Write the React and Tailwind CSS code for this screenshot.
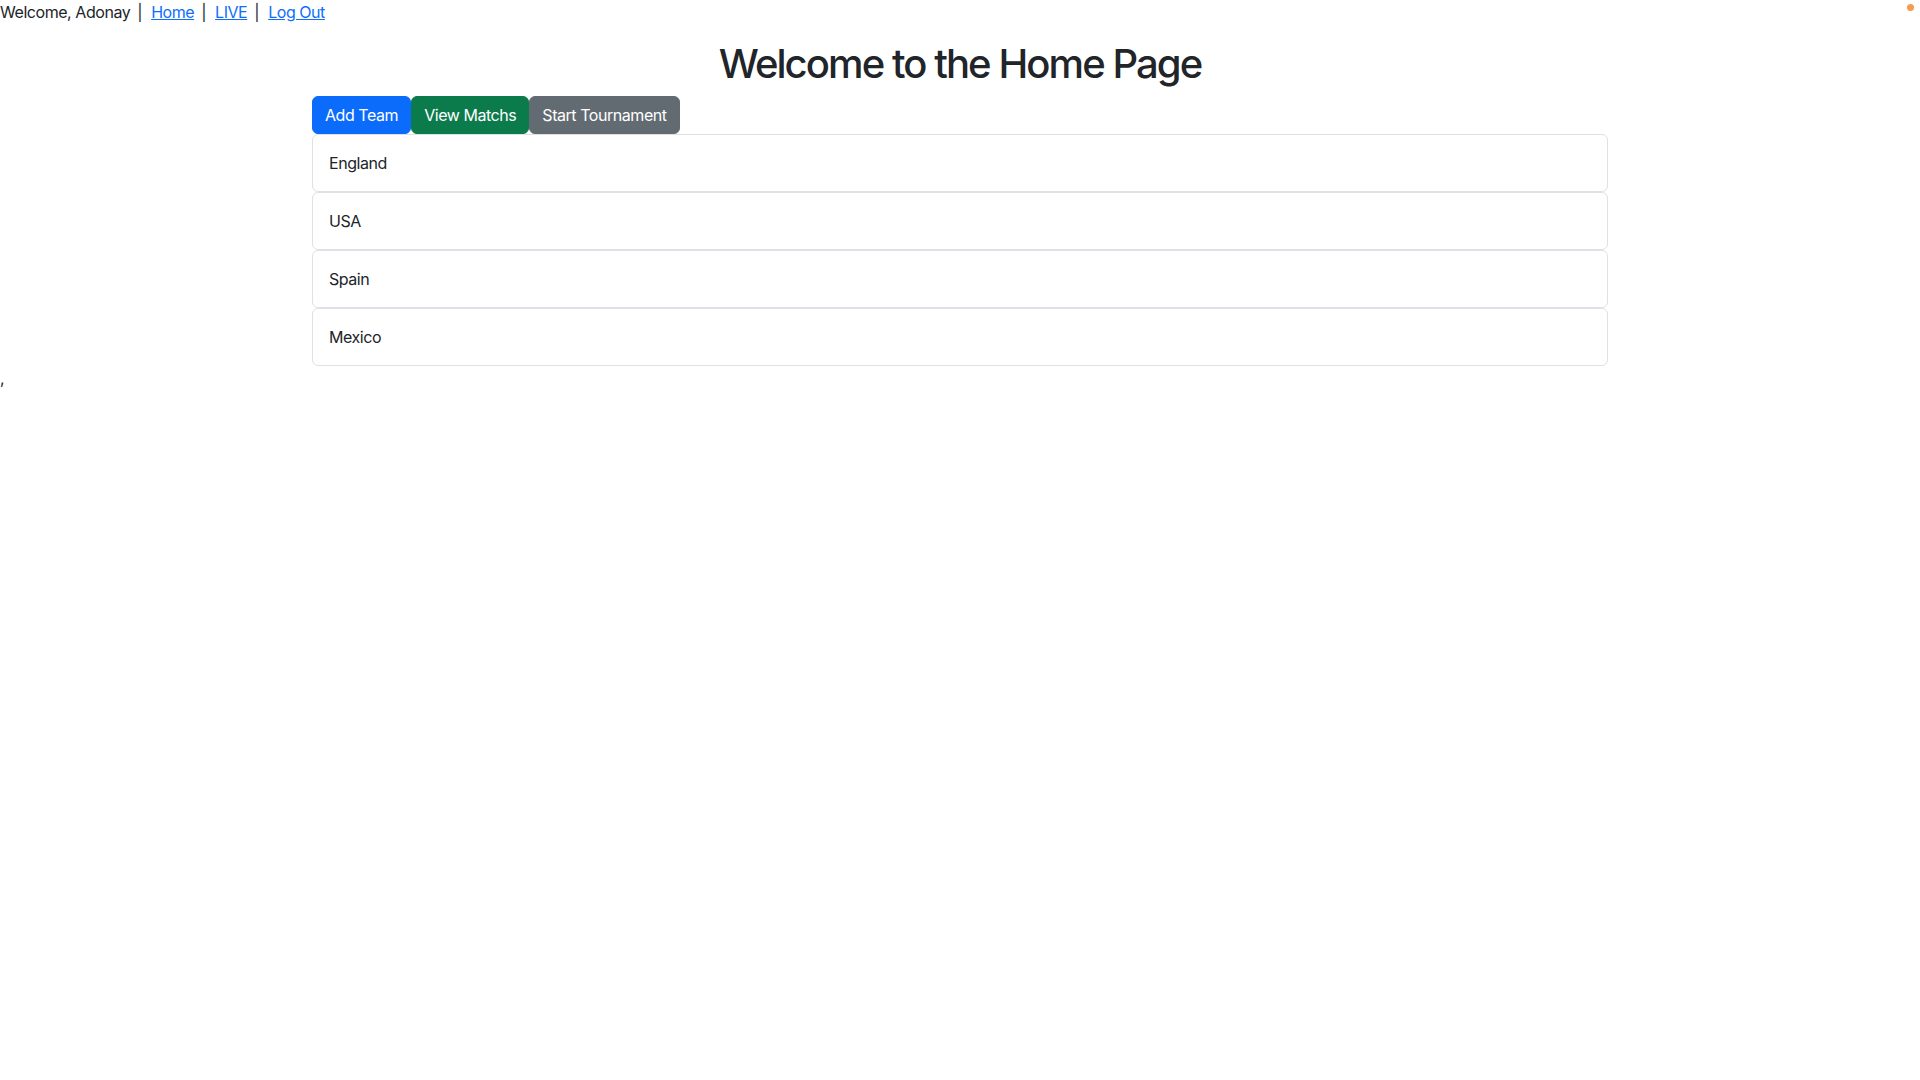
const teams = ["England", "USA", "Spain", "Mexico"];

const buttons = [
  { label: "Add Team", cls: "bg-[#0b6bfb] border-[#0b6bfb]" },
  { label: "View Matchs", cls: "bg-[#0b7b4c] border-[#0b7b4c]" },
  { label: "Start Tournament", cls: "bg-[#626b72] border-[#626b72]" },
];

function Sep() {
  return <span className="pl-[7px] pr-[9px]">|</span>;
}

export default function App() {
  return (
    <div className="relative min-h-screen bg-white font-['Inter','Liberation_Sans',sans-serif] text-[16px] leading-6 tracking-[-0.028em] text-[#212529]">
      <span className="absolute right-[6px] top-[4px] h-[7px] w-[7px] rounded-full bg-[#f79a4f]" />

      <nav className="h-6">
        <span>Welcome, Adonay</span>
        <Sep />
        <a href="#" className="text-[#0d6efd] underline">Home</a>
        <Sep />
        <a href="#" className="text-[#0d6efd] underline">LIVE</a>
        <Sep />
        <a href="#" className="text-[#0d6efd] underline">Log Out</a>
      </nav>

      <div className="mx-auto mt-4 max-w-[1320px] px-3">
        <h1 className="mb-2 text-center text-[40px] font-medium leading-[48px] tracking-[-0.048em]">
          Welcome to the Home Page
        </h1>

        <div className="flex">
          {buttons.map((b) => (
            <button
              key={b.label}
              className={`rounded-md border px-3 py-[6px] text-[16px] leading-6 text-white ${b.cls}`}
            >
              {b.label}
            </button>
          ))}
        </div>

        <div className="flex flex-col">
          {teams.map((t) => (
            <div key={t} className="rounded-md border border-[#dee2e6] px-4 py-4">
              {t}
            </div>
          ))}
        </div>
      </div>

      <div className="h-6">,</div>
    </div>
  );
}
